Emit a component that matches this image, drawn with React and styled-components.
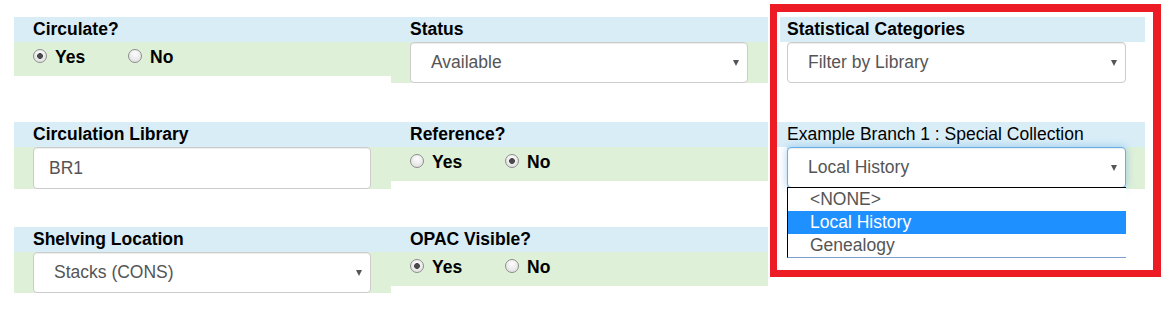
import React from 'react'
import styled, { createGlobalStyle } from 'styled-components'

const GlobalStyle = createGlobalStyle`
  body {
    margin: 0;
    background: #fff;
    color: #000;
    font-family: "Liberation Sans", Arial, sans-serif;
  }
`

const Page = styled.div`
  position: relative;
  width: 1167px;
  height: 309px;
  overflow: hidden;
`

const FieldGrid = styled.div`
  display: grid;
  grid-template-columns: repeat(3, 377px);
  grid-auto-rows: 105px;
  align-items: start;
  margin: 17px 0 0 14px;
`

const Field = styled.div`
  grid-column: ${p => p.$col};
  grid-row: ${p => p.$row};
  margin-left: ${p => p.$offset ?? 0}px;
`

const Label = styled.div`
  height: 25px;
  line-height: 25px;
  background: #d9edf7;
  padding: 0 20px 0 ${p => p.$indent ?? 19}px;
  font-size: 17.5px;
  font-weight: ${p => (p.$light ? 'normal' : 'bold')};
  white-space: nowrap;
`

const Body = styled.div`
  background: ${p => (p.$plain ? 'transparent' : '#dff0d8')};
  padding: 0 ${p => p.$right ?? 20}px 0 ${p => p.$indent ?? 19}px;
  margin-left: ${p => p.$shift ?? 0}px;
  height: ${p => p.$height || 'auto'};
`

const RadioRow = styled.div`
  display: flex;
  height: 34px;
  box-sizing: border-box;
  padding-top: 3px;
`

const Option = styled.label`
  display: inline-flex;
  align-items: flex-start;
  min-width: 95px;
  font-size: 17.5px;
  font-weight: bold;
  line-height: 24px;
`

const Radio = styled.input.attrs({ type: 'radio' })`
  appearance: none;
  flex: none;
  margin: 4px 8px 0 0;
  width: 14px;
  height: 14px;
  border-radius: 50%;
  border: 1px solid #8d8d8d;
  box-sizing: border-box;
  background: radial-gradient(circle at 50% 30%, #fdfdfd 0, #dcdcdc 100%);
  &:checked {
    background:
      radial-gradient(circle, #4a4a4a 0 2.6px, transparent 3.2px),
      radial-gradient(circle at 50% 30%, #fdfdfd 0, #dcdcdc 100%);
  }
`

const TextInput = styled.input`
  display: block;
  width: 338px;
  height: 42px;
  box-sizing: border-box;
  border: 1px solid #ccc;
  border-radius: 4px;
  box-shadow: inset 0 1px 1px rgba(0, 0, 0, 0.075);
  padding: 0 15px;
  font-family: inherit;
  font-size: 17.5px;
  color: #555;
  background: #fff;
`

const SelectBox = styled.div`
  position: relative;
  display: flex;
  align-items: center;
  width: ${p => p.$width || 338}px;
  height: 41px;
  box-sizing: border-box;
  padding-left: 20px;
  border: 1px solid ${p => (p.$focus ? '#66afe9' : '#ccc')};
  border-radius: 4px;
  background: #fff;
  box-shadow: ${p => (p.$focus
    ? 'inset 0 1px 1px rgba(0,0,0,.075), 0 0 8px rgba(102,175,233,.6)'
    : 'inset 0 1px 1px rgba(0,0,0,.075)')};
  font-size: 17.5px;
  color: #555;
`

const SelectValue = styled.span`
  flex: 1;
  white-space: nowrap;
`

const Caret = styled.span`
  flex: none;
  width: 0;
  height: 0;
  margin: 1px 8px 0 0;
  border-left: 3px solid transparent;
  border-right: 3px solid transparent;
  border-top: 6px solid #555;
`

const Menu = styled.ul`
  position: absolute;
  top: 100%;
  left: -1px;
  width: 338px;
  margin: 0;
  padding: 0;
  list-style: none;
  background: #fff;
  border-top: 1px solid #000;
  border-left: 1px solid #000;
  border-bottom: 1px solid #7f9fd0;
  z-index: 2;
`

const MenuItem = styled.li`
  height: 23px;
  line-height: 23px;
  padding-left: 22px;
  font-size: 17.5px;
  color: ${p => (p.$active ? '#fff' : '#555')};
  background: ${p => (p.$active ? '#1e90ff' : 'transparent')};
`

const Highlight = styled.div`
  position: absolute;
  left: 770px;
  top: 4px;
  width: 391px;
  height: 273px;
  box-sizing: border-box;
  border: 8px solid #ed1c24;
  border-left-width: 7px;
  border-bottom-width: 7px;
  pointer-events: none;
`

const Select = ({ value, focus, width, children }) => (
  <SelectBox $focus={focus} $width={width}>
    <SelectValue>{value}</SelectValue>
    <Caret />
    {children}
  </SelectBox>
)

const YesNo = ({ name, yes }) => (
  <RadioRow>
    <Option><Radio name={name} defaultChecked={yes} />Yes</Option>
    <Option><Radio name={name} defaultChecked={!yes} />No</Option>
  </RadioRow>
)

const statOptions = ['<NONE>', 'Local History', 'Genealogy']

export default function App () {
  return (
    <Page>
      <GlobalStyle />
      <FieldGrid>
        <Field $col={1} $row={1}>
          <Label>Circulate?</Label>
          <Body><YesNo name='circulate' yes /></Body>
        </Field>
        <Field $col={2} $row={1}>
          <Label>Status</Label>
          <Body><Select value='Available' /></Body>
        </Field>
        <Field $col={3} $row={1} $offset={12}>
          <Label $indent={7}>Statistical Categories</Label>
          <Body $plain $indent={7} $right={19}>
            <Select value='Filter by Library' width={339} />
          </Body>
        </Field>

        <Field $col={1} $row={2}>
          <Label>Circulation Library</Label>
          <Body><TextInput defaultValue='BR1' /></Body>
        </Field>
        <Field $col={2} $row={2}>
          <Label>Reference?</Label>
          <Body><YesNo name='reference' yes={false} /></Body>
        </Field>
        <Field $col={3} $row={2} $offset={9}>
          <Label $indent={10} $light>Example Branch 1 : Special Collection</Label>
          <Body $shift={10} $indent={0} $right={19} $height='42px'>
            <Select value='Local History' width={339} focus>
              <Menu>
                {statOptions.map(opt => (
                  <MenuItem key={opt} $active={opt === 'Local History'}>{opt}</MenuItem>
                ))}
              </Menu>
            </Select>
          </Body>
        </Field>

        <Field $col={1} $row={3}>
          <Label>Shelving Location</Label>
          <Body><Select value='Stacks (CONS)' /></Body>
        </Field>
        <Field $col={2} $row={3}>
          <Label>OPAC Visible?</Label>
          <Body><YesNo name='opac' yes /></Body>
        </Field>
      </FieldGrid>
      <Highlight />
    </Page>
  )
}
